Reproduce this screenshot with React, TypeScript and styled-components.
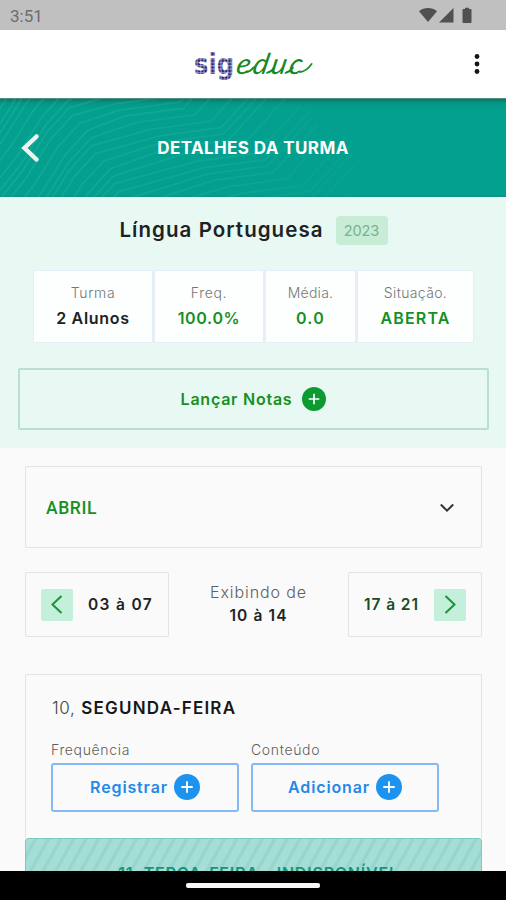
import React from "react";
import styled, { createGlobalStyle } from "styled-components";

const GlobalStyle = createGlobalStyle`
  *, *::before, *::after { box-sizing: border-box; }
  body { margin: 0; background: #fafafa; font-family: Inter, "Open Sans", sans-serif; }
`;

const Screen = styled.div`
  width: 506px;
  height: 900px;
  display: flex;
  flex-direction: column;
  overflow: hidden;
  background: #fafafa;
`;

const StatusBar = styled.div`
  height: 30px;
  flex: none;
  display: flex;
  align-items: center;
  justify-content: space-between;
  padding: 1px 33px 0 10px;
  background: #c0c0c0;
`;

const Clock = styled.span`
  font: 400 17px/20px Roboto, sans-serif;
  letter-spacing: 0;
  color: #6c6c6c;
`;

const AppBar = styled.header`
  height: 69px;
  flex: none;
  display: grid;
  grid-template-columns: 1fr 122px 1fr;
  align-items: center;
  background: #fff;
  border-bottom: 1px solid #4f8f83;
`;

const MenuButton = styled.button`
  grid-column: 3;
  justify-self: end;
  width: 24px;
  height: 24px;
  margin: 0 17px 0 0;
  padding: 0;
  border: 0;
  background: none;
`;

const Hero = styled.div`
  position: relative;
  height: 98px;
  flex: none;
  display: grid;
  grid-template-columns: 60px 1fr 60px;
  align-items: center;
  background: linear-gradient(#08796b 0, #069585 4px, #03a08f 10px, #03a08f 95px, #119382 98px);
`;

const Contours = styled.svg`
  position: absolute;
  inset: 0;
`;

const BackButton = styled.button`
  position: relative;
  width: 22px;
  height: 32px;
  margin-left: 20px;
  padding: 0;
  border: 0;
  background: none;
`;

const HeroTitle = styled.h1`
  position: relative;
  margin: -1px 0 0;
  text-align: center;
  font-size: 17px;
  font-weight: 700;
  line-height: 22px;
  letter-spacing: 0.4px;
  color: #fff;
`;

const Summary = styled.section`
  height: 251px;
  flex: none;
  padding: 19px 17px 0 18px;
  background: #e8f8f3;
`;

const SubjectRow = styled.div`
  display: flex;
  align-items: center;
  justify-content: center;
  gap: 12px;
  height: 29px;
`;

const Subject = styled.h2`
  margin: -2px 0 0;
  font-size: 20.5px;
  font-weight: 600;
  line-height: 28px;
  letter-spacing: 1.05px;
  color: #1d2222;
`;

const YearBadge = styled.span`
  width: 52px;
  height: 29px;
  border-radius: 4px;
  background: #c8ecd5;
  color: #76b391;
  font-size: 14.5px;
  line-height: 29px;
  letter-spacing: -0.1px;
  text-align: center;
`;

const Stats = styled.div`
  display: grid;
  grid-template-columns: 118px 108px 89px 115px;
  gap: 3px;
  width: 441px;
  height: 73px;
  margin: 25px 0 0 15px;
  padding: 1px;
  background: #e6eff6;
`;

const Stat = styled.div`
  display: flex;
  flex-direction: column;
  align-items: center;
  padding-top: 12px;
  background: #fdfefe;
`;

const StatLabel = styled.span<{ $spacing: number }>`
  font-size: 14px;
  font-weight: 300;
  line-height: 20px;
  letter-spacing: ${(p) => p.$spacing}px;
  color: #737878;
`;

const StatValue = styled.span<{ $spacing: number; $good?: boolean }>`
  margin-top: 5px;
  font-size: 16px;
  font-weight: 600;
  line-height: 20px;
  letter-spacing: ${(p) => p.$spacing}px;
  color: ${(p) => (p.$good ? "#159024" : "#1d2222")};
`;

const GradesButton = styled.button`
  display: flex;
  align-items: center;
  justify-content: center;
  gap: 10px;
  width: 471px;
  height: 62px;
  margin-top: 25px;
  padding: 0 0 1px;
  border: 2px solid #b9dfd1;
  border-radius: 2px;
  background: none;
  font: 600 16px/20px Inter, sans-serif;
  letter-spacing: 0.76px;
  color: #159024;
`;

const Main = styled.main`
  flex: 1;
  min-height: 0;
  overflow: hidden;
  padding: 18px 24px 0 25px;
`;

const MonthSelect = styled.div`
  display: flex;
  align-items: center;
  justify-content: space-between;
  height: 82px;
  padding: 1px 27px 0 20px;
  border: 1px solid #e3e3e3;
  border-radius: 2px;
`;

const Month = styled.span`
  font: 500 17.5px/22px Roboto, sans-serif;
  letter-spacing: 0.6px;
  color: #159024;
`;

const WeekNav = styled.div`
  display: grid;
  grid-template-columns: 144px 1fr 134px;
  height: 65px;
  margin-top: 24px;
`;

const WeekButton = styled.button<{ $spacing: number; $tone: string }>`
  display: flex;
  align-items: center;
  justify-content: space-between;
  padding: 0 15px;
  border: 1px solid #e3e3e3;
  border-radius: 2px;
  background: none;
  font: 600 15.5px/20px Inter, sans-serif;
  letter-spacing: ${(p) => p.$spacing}px;
  color: ${(p) => p.$tone};
`;

const ArrowTile = styled.span`
  display: grid;
  place-items: center;
  width: 32px;
  height: 32px;
  border-radius: 2px;
  background: #c4efda;
`;

const CurrentWeek = styled.div`
  display: flex;
  flex-direction: column;
  align-items: center;
  padding-top: 8px;
`;

const Showing = styled.span`
  font-size: 16px;
  font-weight: 300;
  line-height: 24px;
  letter-spacing: 0.89px;
  color: #606060;
`;

const Range = styled.span`
  font-size: 15.5px;
  font-weight: 600;
  line-height: 24px;
  letter-spacing: 1.11px;
  color: #222;
`;

const DayCard = styled.article`
  height: 164px;
  margin-top: 37px;
  padding: 21px 25px 0;
  border: 1px solid #e3e3e3;
  border-bottom: 0;
  border-radius: 2px 2px 0 0;
`;

const DayTitle = styled.h3`
  display: flex;
  gap: 6px;
  margin: 0 0 0 1px;
  font-size: 17px;
  font-weight: 600;
  line-height: 24px;
  letter-spacing: 1.2px;
  color: #171717;
`;

const DayNumber = styled.span`
  font-weight: 300;
  letter-spacing: 0.6px;
  color: #444;
`;

const Actions = styled.div`
  display: grid;
  grid-template-columns: 188px 188px;
  gap: 12px;
  margin-top: 20px;
`;

const Field = styled.div`
  display: flex;
  flex-direction: column;
`;

const FieldLabel = styled.span`
  font-size: 14px;
  font-weight: 300;
  line-height: 20px;
  letter-spacing: 0.65px;
  color: #5e5e5e;
`;

const ActionButton = styled.button`
  display: flex;
  align-items: center;
  justify-content: center;
  gap: 6px;
  height: 49px;
  margin-top: 3px;
  padding: 0 0 1px;
  border: 2px solid #84b9f5;
  border-radius: 3px;
  background: none;
  font: 600 16px/20px Inter, sans-serif;
  letter-spacing: 0.86px;
  color: #2489e8;
`;

const UnavailableDay = styled.div`
  height: 72px;
  padding-top: 24px;
  padding-left: 10px;
  border: 1px solid #7ccabb;
  border-radius: 3px;
  background: repeating-linear-gradient(119deg, #a4ded6 0 6px, #97d4cb 8px 9px, #a4ded6 11px);
  text-align: center;
  font-size: 16px;
  font-weight: 600;
  line-height: 20px;
  letter-spacing: 0.8px;
  color: #12967e;
`;

const NavBar = styled.div`
  height: 29px;
  flex: none;
  display: flex;
  justify-content: center;
  padding-top: 12px;
  background: #000;
`;

const HomeHandle = styled.div`
  width: 134px;
  height: 5px;
  border-radius: 2px;
  background: #f6f6f6;
`;

const StatusIcons = () => (
  <svg width="54" height="18" viewBox="0 0 54 18" fill="#505050">
    <path d="M0 4.3C4.8-.1 13.2-.1 18 4.3L9 15Z" />
    <path d="M34.5 1v14.5H20Z" />
    <path d="M46 .7h4v1.4h1.700q.8 0 .8.8v12.4q0 .8-.8.8h-7.4q-.8 0-.8-.8V2.9q0-.8.8-.8H46Z" />
  </svg>
);

const Logo = () => (
  <svg width="122" height="40" viewBox="0 0 122 40" role="img" aria-label="sigeduc">
    <defs>
      <pattern id="dots" width="3.4" height="3.4" x="2" y="1.5" patternUnits="userSpaceOnUse">
        <rect width="3.4" height="3.4" fill="#c3c1e2" />
        <rect x=".3" y=".3" width="2.6" height="2.6" fill="#2a2272" />
      </pattern>
    </defs>
    <text x="2" y="30" textLength="40" lengthAdjust="spacingAndGlyphs" fill="url(#dots)"
      fontFamily="DejaVu Sans" fontWeight="700" fontSize="29">sig</text>
    <g transform="translate(43 29.500) skewX(-12)">
      <text x="0" y="0" textLength="66" fill="#168a24"
        fontFamily="Lato" fontStyle="italic" fontSize="29">educ</text>
      <path d="M11-1.200q4-.8 6.500-5M32-.8q4-.8 6-5M50.500-.8q4-.8 6-5M65-1.400q6-1 9.500-8"
        fill="none" stroke="#168a24" strokeWidth="2" strokeLinecap="round" />
    </g>
  </svg>
);

const contourLines = Array.from({ length: 36 }, (_, n) => {
  const i = n - 16;
  const wave = Math.sin(i * 1.3) * 3;
  const ax = 80 + 4.6 * i + wave;
  const ay = 24 + 7.6 * i;
  const bx = 180 + 9 * i - wave * 2;
  const by = 3 + 6.4 * i;
  return `M${ax - 80} ${ay + 105}L${ax - 46} ${ay + 62}L${ax - 22} ${ay + 24}L${ax} ${ay}L${bx - 60} ${by + 8}L${bx} ${by}L${bx + 44} ${by - 48}`;
}).join("");

const HeroContours = () => (
  <Contours width="506" height="98" viewBox="0 0 506 98">
    <defs>
      <linearGradient id="fade" gradientUnits="userSpaceOnUse" x1="0" y1="0" x2="460" y2="90">
        <stop offset="0" stopColor="#46c0ac" stopOpacity=".26" />
        <stop offset=".5" stopColor="#46c0ac" stopOpacity=".18" />
        <stop offset=".9" stopColor="#46c0ac" stopOpacity="0" />
      </linearGradient>
    </defs>
    <path d={contourLines} fill="none" stroke="url(#fade)" strokeWidth="1.6" strokeLinejoin="round" />
  </Contours>
);

const PlusCircle = ({ size, color }: { size: number; color: string }) => (
  <svg width={size} height={size} viewBox="0 0 24 24">
    <circle cx="12" cy="12" r="12" fill={color} />
    <path d="M12 6.700v10.600M6.700 12h10.600" stroke="#fff" strokeWidth="1.700" />
  </svg>
);

const Arrow = ({ right = false }: { right?: boolean }) => (
  <svg width="12" height="19" viewBox="0 0 12 19" fill="none" stroke="#169534" strokeWidth="2">
    <path d={right ? "M1.500 1l9 8.500-9 8.500" : "M10.500 1l-9 8.500 9 8.500"} />
  </svg>
);

const stats = [
  { label: "Turma", ls: 0.7, value: "2 Alunos", vs: 0.72, good: false },
  { label: "Freq.", ls: 0.7, value: "100.0%", vs: 0.66, good: true },
  { label: "Média.", ls: 0.25, value: "0.0", vs: 1.2, good: true },
  { label: "Situação.", ls: 0.36, value: "ABERTA", vs: 1.18, good: true },
];

const actions = [
  { label: "Frequência", text: "Registrar" },
  { label: "Conteúdo", text: "Adicionar" },
];

export default function App() {
  return (
    <>
      <GlobalStyle />
      <Screen>
        <StatusBar>
          <Clock>3:51</Clock>
          <StatusIcons />
        </StatusBar>
        <AppBar>
          <span />
          <Logo />
          <MenuButton aria-label="Menu">
            <svg width="24" height="24" fill="#161616">
              <circle cx="12" cy="4.500" r="2.400" />
              <circle cx="12" cy="12" r="2.400" />
              <circle cx="12" cy="19.500" r="2.400" />
            </svg>
          </MenuButton>
        </AppBar>
        <Hero>
          <HeroContours />
          <BackButton aria-label="Voltar">
            <svg width="22" height="32" fill="none" stroke="#ecf3f1" strokeWidth="4.500" strokeLinecap="round">
              <path d="M16.500 4.500L4.500 16l12 11.500" />
            </svg>
          </BackButton>
          <HeroTitle>DETALHES DA TURMA</HeroTitle>
        </Hero>
        <Summary>
          <SubjectRow>
            <Subject>Língua Portuguesa</Subject>
            <YearBadge>2023</YearBadge>
          </SubjectRow>
          <Stats>
            {stats.map((s) => (
              <Stat key={s.label}>
                <StatLabel $spacing={s.ls}>{s.label}</StatLabel>
                <StatValue $spacing={s.vs} $good={s.good}>{s.value}</StatValue>
              </Stat>
            ))}
          </Stats>
          <GradesButton>
            Lançar Notas
            <PlusCircle size={24} color="#0c9a31" />
          </GradesButton>
        </Summary>
        <Main>
          <MonthSelect>
            <Month>ABRIL</Month>
            <svg width="14" height="10" fill="none" stroke="#333" strokeWidth="2">
              <path d="M.8 1.500L7 7.700l6.200-6.200" />
            </svg>
          </MonthSelect>
          <WeekNav>
            <WeekButton $spacing={1.35} $tone="#222">
              <ArrowTile><Arrow /></ArrowTile>
              03 à 07
            </WeekButton>
            <CurrentWeek>
              <Showing>Exibindo de</Showing>
              <Range>10 à 14</Range>
            </CurrentWeek>
            <WeekButton $spacing={0.93} $tone="#1c4a22">
              17 à 21
              <ArrowTile><Arrow right /></ArrowTile>
            </WeekButton>
          </WeekNav>
          <DayCard>
            <DayTitle><DayNumber>10,</DayNumber>SEGUNDA-FEIRA</DayTitle>
            <Actions>
              {actions.map((a) => (
                <Field key={a.label}>
                  <FieldLabel>{a.label}</FieldLabel>
                  <ActionButton>
                    {a.text}
                    <PlusCircle size={26} color="#1c93ee" />
                  </ActionButton>
                </Field>
              ))}
            </Actions>
          </DayCard>
          <UnavailableDay>11, TERÇA-FEIRA - INDISPONÍVEL</UnavailableDay>
        </Main>
        <NavBar>
          <HomeHandle />
        </NavBar>
      </Screen>
    </>
  );
}
